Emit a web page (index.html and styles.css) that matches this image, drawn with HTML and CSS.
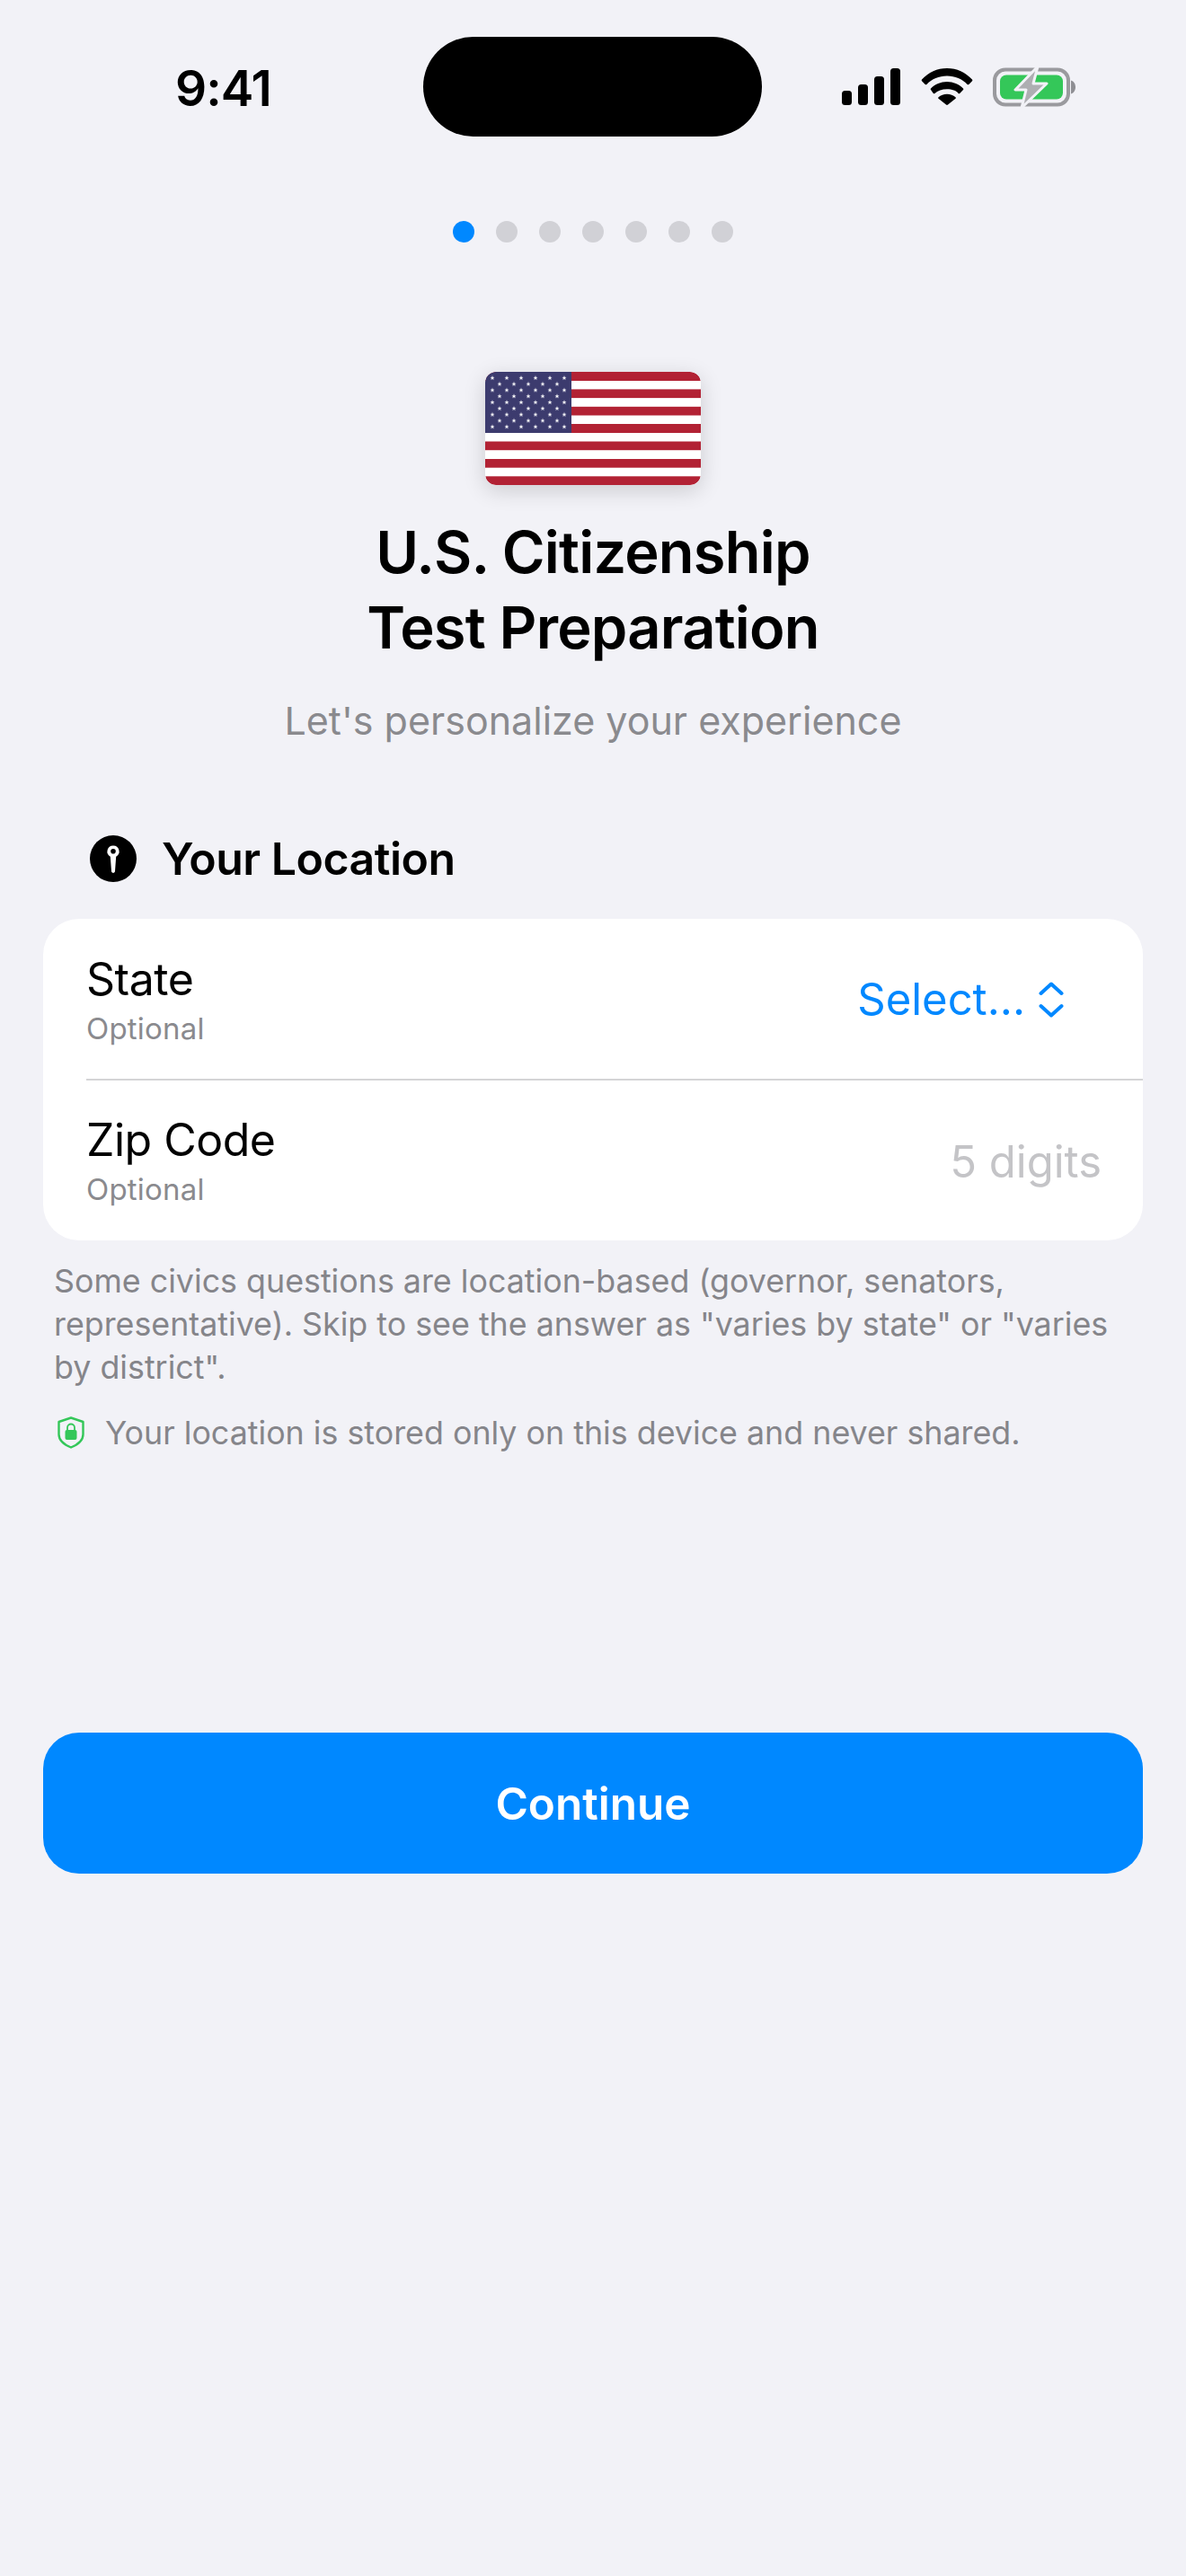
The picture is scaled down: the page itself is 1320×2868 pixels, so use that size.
FILE: index.html
```html
<!DOCTYPE html>
<html lang="en">
<head>
<meta charset="utf-8">
<title>U.S. Citizenship Test Preparation</title>
<link rel="stylesheet" href="styles.css">
</head>
<body>
<main class="screen">
  <header class="status">
    <span class="time">9:41</span>
    <div class="island"></div>
    <div class="indicators">
      <svg class="signal" width="66" height="42" viewBox="0 0 66 42"><g fill="#000"><rect x="0" y="25" width="11" height="16" rx="3.5"/><rect x="18" y="18" width="11" height="23" rx="3.5"/><rect x="36" y="9" width="11" height="32" rx="3.5"/><rect x="54" y="0" width="11" height="41" rx="3.5"/></g></svg>
      <svg class="wifi" width="58" height="42" viewBox="0 0 58 42"><g fill="#000"><path d="M1 13.500C8.500 5.500 18 1 29 1s20.500 4.500 28 12.500c.5.600.5 1.200 0 1.700l-3.700 3.700c-.5.500-1.200.5-1.700 0C46 13 38 9.500 29 9.500S12 13 6.400 18.900c-.5.500-1.200.5-1.700 0L1 15.200c-.5-.5-.5-1.100 0-1.700z"/><path d="M11 23.500C15.700 18.800 22 16 29 16s13.300 2.800 18 7.500c.5.500.5 1.100 0 1.600l-3.800 3.800c-.5.500-1.100.5-1.600 0C39.500 26 34.500 24.300 29 24.300S18.500 26 15.400 28.900c-.5.500-1.100.5-1.600 0L11 25.100c-.5-.5-.5-1.100 0-1.600z"/><path d="M19.500 33.200C22 31 25.300 29.800 29 29.800s7 1.200 9.500 3.400c.5.500.5 1 0 1.500l-8.500 6.900c-.6.500-1.400.5-2 0l-8.500-6.900c-.5-.5-.5-1 0-1.500z"/></g></svg>
      <svg class="battery" width="94" height="46" viewBox="0 0 94 46"><rect x="2" y="3.500" width="82" height="39" rx="12" fill="none" stroke="#9a9a9e" stroke-width="4"/><rect x="8" y="9.500" width="70" height="27" rx="7" fill="#34c759"/><path d="M87 15.500c3 .8 5 4 5 7.500s-2 6.700-5 7.500z" fill="#8e8e93"/><path d="M50 0 25 26h12l-5 20 28-27H45z" fill="#aeaeb2" stroke="#f2f2f7" stroke-width="3" stroke-linejoin="round"/></svg>
    </div>
  </header>

  <div class="dots">
    <span class="dot dot-active"></span><span class="dot"></span><span class="dot"></span><span class="dot"></span><span class="dot"></span><span class="dot"></span><span class="dot"></span>
  </div>

  <svg class="flag" width="240" height="126" viewBox="0 0 240 126">
    <defs>
      <clipPath id="flag-clip"><rect width="240" height="126" rx="12"/></clipPath>
      <polygon id="star" points="0,-2.600 .7,-.8 2.500,-.8 1.100,.3 1.600,2.100 0,1 -1.600,2.100 -1.100,.3 -2.500,-.8 -.7,-.8" fill="#fff"/>
      <pattern id="stars-a" width="16" height="13.600" patternUnits="userSpaceOnUse" x="0" y="0"><use href="#star" x="8" y="6.800"/></pattern>
      <pattern id="stars-b" width="16" height="13.600" patternUnits="userSpaceOnUse" x="8" y="6.800"><use href="#star" x="8" y="6.800"/></pattern>
    </defs>
    <g clip-path="url(#flag-clip)">
      <rect width="240" height="126" fill="#fff"/>
      <g fill="#b22234">
        <rect y="0" width="240" height="10"/><rect y="19.400" width="240" height="9.700"/><rect y="38.800" width="240" height="9.700"/><rect y="58" width="240" height="10"/><rect y="77.500" width="240" height="9.700"/><rect y="97" width="240" height="9.700"/><rect y="116.300" width="240" height="9.700"/>
      </g>
      <rect width="96" height="68" fill="#3c3b6e"/>
      <rect width="96" height="68" fill="url(#stars-a)"/>
      <rect x="8" y="6" width="80" height="56" fill="url(#stars-b)"/>
    </g>
  </svg>

  <h1 class="title">U.S. Citizenship<br>Test Preparation</h1>
  <p class="subtitle">Let's personalize your experience</p>

  <section class="location">
    <div class="section-head">
      <svg class="pin" width="52" height="52" viewBox="0 0 52 52"><circle cx="26" cy="26" r="26" fill="#000"/><path fill-rule="evenodd" d="M26 11.500a6.500 6.500 0 0 1 3.200 12.200L28 40c-.1 1-.9 1.800-2 1.800s-1.900-.8-2-1.800l-1.200-16.300A6.500 6.500 0 0 1 26 11.500zm0 3.500a2.800 2.800 0 1 0 0 5.600 2.800 2.800 0 0 0 0-5.600z" fill="#fff"/></svg>
      <h2 class="section-title">Your Location</h2>
    </div>

    <div class="card">
      <div class="row">
        <div class="row-label"><span class="label">State</span><span class="hint">Optional</span></div>
        <div class="picker">
          <span class="picker-text">Select...</span>
          <svg class="chevrons" width="28" height="40" viewBox="0 0 28 40"><path d="M2.500 13 14 2.500 25.500 13M2.500 27 14 37.500 25.500 27" fill="none" stroke="#0088ff" stroke-width="4" stroke-linecap="round" stroke-linejoin="round"/></svg>
        </div>
      </div>
      <div class="divider"></div>
      <div class="row">
        <div class="row-label"><span class="label">Zip Code</span><span class="hint">Optional</span></div>
        <span class="placeholder">5 digits</span>
      </div>
    </div>

    <p class="note">Some civics questions are location-based (governor, senators, representative). Skip to see the answer as "varies by state" or "varies by district".</p>

    <div class="privacy">
      <svg class="shield" width="30" height="36" viewBox="0 0 30 36"><path d="M15 1.500 28.500 6v14c0 6-5 11-13.500 14.500C6.500 31 1.500 26 1.500 20V6z" fill="none" stroke="#34c759" stroke-width="2.400" stroke-linejoin="round"/><rect x="8.500" y="15" width="13" height="11" rx="2" fill="#34c759"/><path d="M11 15.500v-3a4 4 0 0 1 8 0v3" fill="none" stroke="#34c759" stroke-width="1.800"/></svg>
      <span class="privacy-text">Your location is stored only on this device and never shared.</span>
    </div>
  </section>

  <button class="continue" type="button">Continue</button>
</main>
</body>
</html>
```
FILE: styles.css
```css
* { box-sizing: border-box; }
html, body { margin: 0; padding: 0; background: #f2f2f7; }
body { font-family: Inter, "Noto Sans", "Liberation Sans", sans-serif; color: #000; }
.screen { width: 1320px; height: 2868px; display: flex; flex-direction: column; align-items: center; overflow: hidden; }

.status { width: 100%; height: 152px; padding: 41px 0 0 195px; display: flex; align-items: flex-start; }
.time { width: 276px; height: 111px; font-size: 55px; font-weight: 600; line-height: 114px; letter-spacing: -1px; }
.island { width: 377px; height: 111px; border-radius: 56px; background: #000; flex: none; }
.indicators { margin-left: 89px; height: 111px; display: flex; align-items: center; }
.signal { margin-top: 1px; }
.wifi { margin-left: 22px; margin-top: -1px; }
.battery { margin-left: 22px; }

.dots { margin-top: 94px; display: flex; gap: 24px; }
.dot { width: 24px; height: 24px; border-radius: 50%; background: #d1d1d6; }
.dot-active { background: #0088ff; }

.flag { margin-top: 144px; flex: none; border-radius: 12px; box-shadow: 0 6px 24px rgba(0, 0, 0, .16); }
.title { margin: 33px 0 0; font-size: 65px; line-height: 84px; font-weight: 600; letter-spacing: -.8px; text-align: center; }
.subtitle { margin: 28px 0 0; font-size: 43px; line-height: 66px; color: #8a8a8e; text-align: center; }

.location { width: 100%; padding: 0 48px; }
.section-head { margin: 88px 0 0 52px; height: 66px; display: flex; align-items: center; gap: 28px; }
.section-title { margin: 0; font-size: 50px; font-weight: 600; line-height: 66px; letter-spacing: -.5px; }

.card { margin-top: 34px; height: 358px; background: #fff; border-radius: 40px; overflow: hidden; }
.row { height: 179px; padding: 0 48px; display: flex; align-items: center; justify-content: space-between; }
.row-label { display: flex; flex-direction: column; gap: 5px; }
.label { font-size: 50px; line-height: 60px; letter-spacing: -.5px; }
.hint { font-size: 33px; line-height: 40px; color: #8a8a8e; letter-spacing: .2px; }
.divider { height: 2px; margin: -1px 0 -1px 48px; background: #d4d4d6; }
.picker { display: flex; align-items: center; gap: 15px; margin-right: 40px; }
.picker-text { font-size: 49px; line-height: 60px; color: #0088ff; }
.placeholder { font-size: 49px; line-height: 60px; color: #c4c4c7; margin: 4px -2px 0 0; }

.note { margin: 21px 0 0 12px; width: 1180px; font-size: 35.8px; line-height: 48px; color: #85858a; }
.privacy { margin: 25px 0 0 16px; height: 48px; display: flex; align-items: center; gap: 23px; }
.shield { flex: none; }
.privacy-text { font-size: 35.8px; line-height: 48px; color: #85858a; }

.continue { margin-top: 310px; width: 1224px; height: 157px; flex: none; border: 0; border-radius: 40px; background: #0088ff; color: #fff; font-family: inherit; font-size: 49.5px; font-weight: 600; }
```
